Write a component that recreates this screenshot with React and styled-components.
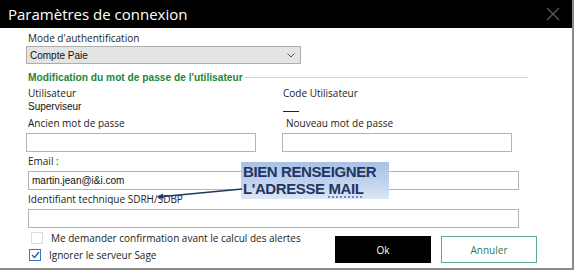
import React from 'react';
import styled, { createGlobalStyle } from 'styled-components';

const Global = createGlobalStyle`
  html, body { margin: 0; padding: 0; background: #fff; }
  body { font-family: "Open Sans", "Noto Sans", sans-serif; }
`;

const Window = styled.div`
  position: relative;
  width: 572px;
  height: 268px;
  border-right: 2px solid #8a8a8a;
  border-bottom: 2px solid #8a8a8a;
  background: #fff;
  overflow: hidden;
`;

const TitleBar = styled.div`
  height: 28px;
  background: #000;
  display: flex;
  align-items: center;
  justify-content: space-between;
  padding: 0 12px 0 8px;
  color: #fff;
  font-family: "Open Sans", sans-serif;
  font-size: 15px;
`;

const Close = styled.svg`
  width: 14px;
  height: 14px;
`;

const Body = styled.div`
  padding: 4px 0 0 26px;
  width: 494px;
`;

const Label = styled.div`
  font-size: 10px;
  line-height: 12px;
  height: 12px;
  color: #1b1b1b;
  padding-left: ${p => p.$indent || 2}px;
  margin-top: ${p => p.$mt || 0}px;
  white-space: nowrap;
  overflow: hidden;
  width: ${p => (p.$clip ? `${p.$clip}px` : 'auto')};
`;

const Select = styled.div`
  box-sizing: border-box;
  margin-top: 2px;
  width: 275px;
  height: 18px;
  background: #e4e4e4;
  border: 1px solid #adadad;
  display: flex;
  align-items: center;
  justify-content: space-between;
  padding: 0 5px 0 3px;
  font-family: "Liberation Sans", Arial, sans-serif;
  font-size: 10px;
  color: #111;
`;

const SectionHead = styled.div`
  display: flex;
  align-items: center;
  gap: 2px;
  margin-top: 6px;
  height: 14px;
  width: 502px;
`;

const SectionTitle = styled.span`
  color: #1b873a;
  font-weight: 700;
  font-size: 10.2px;
  font-family: "Liberation Sans", Arial, sans-serif;
  padding-left: 2px;
  white-space: nowrap;
`;

const Rule = styled.span`
  flex: 1;
  height: 1px;
  background: #d4d4d4;
`;

const Columns = styled.div`
  display: grid;
  grid-template-columns: 256px 240px;
  margin-top: 3px;
`;

const Column = styled.div`
  display: flex;
  flex-direction: column;
`;

const Value = styled.div`
  font-family: "Liberation Sans", Arial, sans-serif;
  font-size: 10px;
  line-height: 12px;
  height: 12px;
  margin-top: 2px;
  padding-left: 2px;
  color: #111;
`;

const Dash = styled.div`
  width: 16px;
  height: 1px;
  background: #222;
  margin: 12px 0 5px 1px;
`;

const Input = styled.div`
  box-sizing: border-box;
  width: ${p => p.$w}px;
  height: 19px;
  border: 1px solid #b4b4b4;
  background: #fff;
  margin: 4px 0 0 ${p => p.$ml || 0}px;
  font-family: "Liberation Sans", Arial, sans-serif;
  font-size: 10px;
  line-height: 17px;
  padding-left: 3px;
  color: #111;
`;

const Footer = styled.div`
  display: flex;
  justify-content: space-between;
  align-items: flex-start;
  margin-top: 4px;
  width: 511px;
`;

const Checks = styled.div`
  display: flex;
  flex-direction: column;
  gap: 5px;
  padding-left: 4px;
`;

const CheckRow = styled.label`
  display: flex;
  align-items: center;
  gap: 8px;
  font-size: 10px;
  color: #1b1b1b;
  height: 12px;
`;

const Box = styled.span`
  box-sizing: border-box;
  width: 12px;
  height: 12px;
  border: 1px solid ${p => (p.$on ? '#3a78c2' : '#dcdcdc')};
  background: #fff;
  display: flex;
  align-items: center;
  justify-content: center;
  margin-left: ${p => (p.$on ? -1 : 1)}px;
`;

const Buttons = styled.div`
  display: flex;
  gap: 10px;
  margin-top: 4px;
`;

const Button = styled.div`
  box-sizing: border-box;
  width: 96px;
  height: 27px;
  display: flex;
  align-items: center;
  justify-content: center;
  font-size: 10px;
  background: ${p => (p.$primary ? '#000' : '#fff')};
  color: ${p => (p.$primary ? '#fff' : '#2f7d50')};
  border: 1px solid ${p => (p.$primary ? '#000' : '#5fa98f')};
`;

const Callout = styled.div`
  position: absolute;
  left: 241px;
  top: 162px;
  width: 148px;
  height: 37px;
  background: linear-gradient(180deg, #a9c1e6 0%, #c3d4ee 60%, #dde6f5 100%);
  color: #1f3663;
  font-family: "Liberation Sans", Arial, sans-serif;
  font-weight: 700;
  font-size: 15px;
  line-height: 17px;
  letter-spacing: -0.4px;
  padding: 1px 0 0 2px;
  box-sizing: border-box;
  white-space: nowrap;
`;

const Misspelt = styled.span`
  text-decoration: underline dotted #6a5acd;
  text-underline-offset: 3px;
`;

const Arrow = styled.svg`
  position: absolute;
  left: 150px;
  top: 185px;
  width: 95px;
  height: 16px;
  overflow: visible;
`;

export default function App() {
  return (
    <>
      <Global />
      <Window>
        <TitleBar>
          <span>Paramètres de connexion</span>
          <Close viewBox="0 0 14 14">
            <path d="M1 1 L13 13 M13 1 L1 13" stroke="#5a5a5a" strokeWidth="1.3" />
          </Close>
        </TitleBar>
        <Body>
          <Label $clip={142}>Mode d'authentification</Label>
          <Select>
            <span>Compte Paie</span>
            <svg width="8" height="5" viewBox="0 0 8 5">
              <path d="M0.5 0.5 L4 4 L7.5 0.5" fill="none" stroke="#555" strokeWidth="1" />
            </svg>
          </Select>
          <SectionHead>
            <SectionTitle>Modification du mot de passe de l'utilisateur</SectionTitle>
            <Rule />
          </SectionHead>
          <Columns>
            <Column>
              <Label>Utilisateur</Label>
              <Value>Superviseur</Value>
              <Label $mt={4}>Ancien mot de passe</Label>
              <Input $w={230} />
            </Column>
            <Column>
              <Label $indent={1}>Code Utilisateur</Label>
              <Dash />
              <Label $indent={4}>Nouveau mot de passe</Label>
              <Input $w={230} />
            </Column>
          </Columns>
          <Label $mt={3}>Email :</Label>
          <Input $w={491} $ml={2}>martin.jean@i&amp;i.com</Input>
          <Label $mt={3}>Identifiant technique SDRH/SDBP</Label>
          <Input $w={491} $ml={2} />
          <Footer>
            <Checks>
              <CheckRow>
                <Box />
                Me demander confirmation avant le calcul des alertes
              </CheckRow>
              <CheckRow>
                <Box $on>
                  <svg width="9" height="8" viewBox="0 0 9 8">
                    <path d="M1 4 L3.5 6.5 L8 1" fill="none" stroke="#2a62b0" strokeWidth="1.5" />
                  </svg>
                </Box>
                Ignorer le serveur Sage
              </CheckRow>
            </Checks>
            <Buttons>
              <Button $primary>Ok</Button>
              <Button>Annuler</Button>
            </Buttons>
          </Footer>
        </Body>
        <Callout>
          BIEN RENSEIGNER
          <br />
          L'ADRESSE <Misspelt>MAIL</Misspelt>
        </Callout>
        <Arrow viewBox="0 0 95 16">
          <path d="M92 4 L8 12" stroke="#1f3663" strokeWidth="1.3" fill="none" />
          <path d="M7 12 L13 8.5 L13.5 14 Z" fill="#1f3663" />
        </Arrow>
      </Window>
    </>
  );
}
